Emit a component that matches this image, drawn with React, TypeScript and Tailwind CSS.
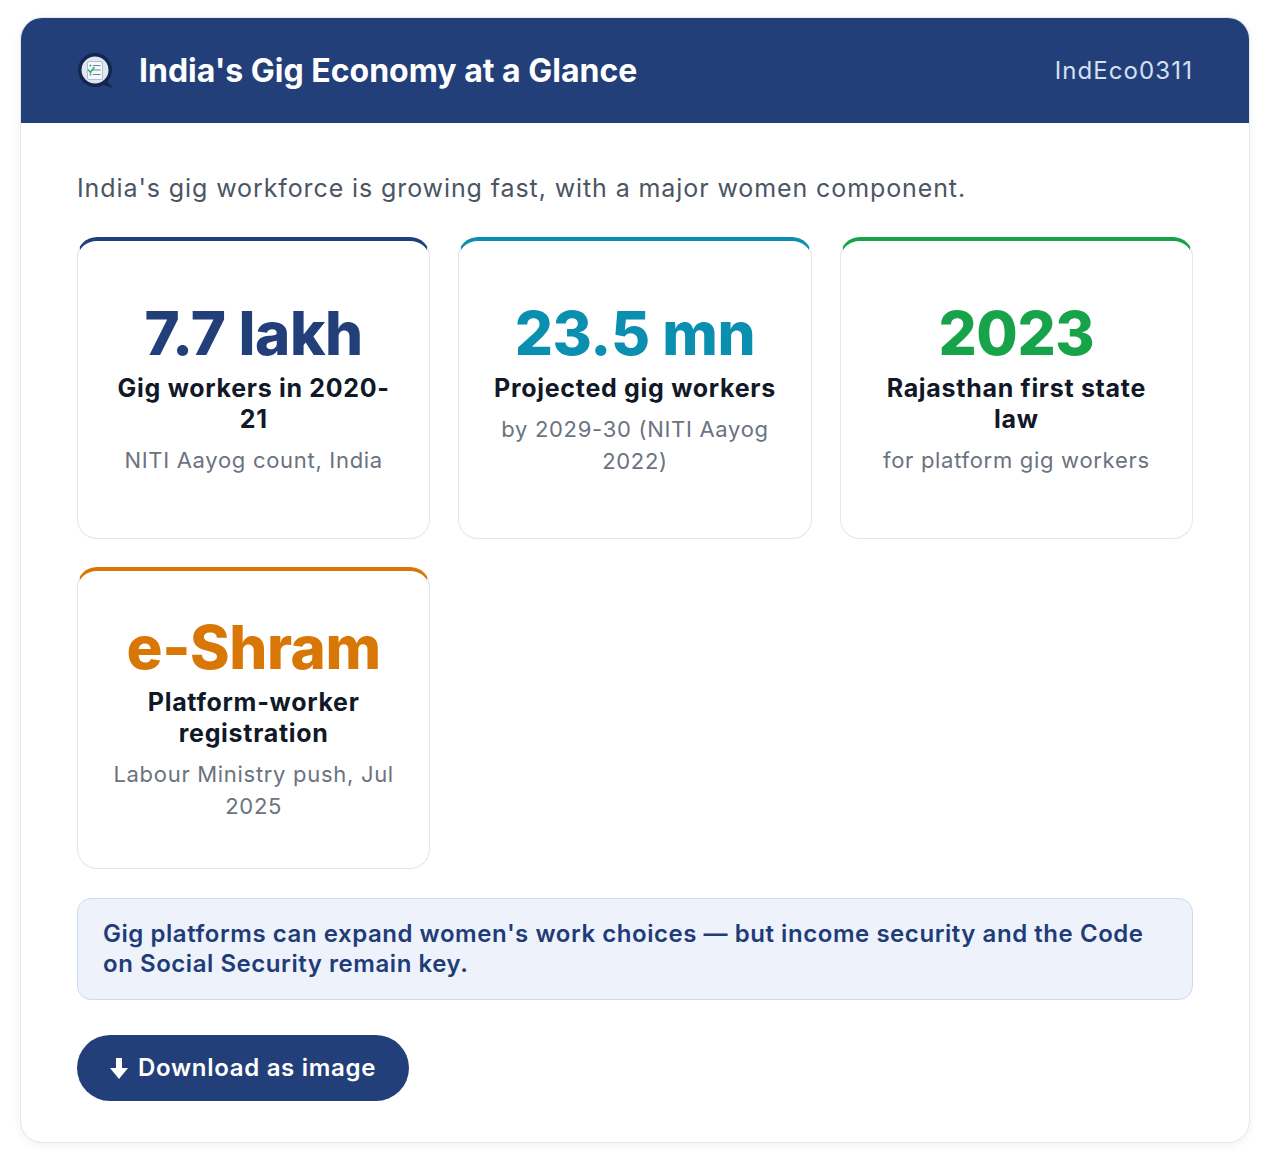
import React from 'react';

type Stat = {
  value: string;
  label: string;
  source: string;
  valueClass: string;
  borderClass: string;
};

const stats: Stat[] = [
  {
    value: '7.7 lakh',
    label: 'Gig workers in 2020-21',
    source: 'NITI Aayog count, India',
    valueClass: 'text-[#233f7a]',
    borderClass: 'border-t-[#233f7a]',
  },
  {
    value: '23.5 mn',
    label: 'Projected gig workers',
    source: 'by 2029-30 (NITI Aayog 2022)',
    valueClass: 'text-[#0b8fb0]',
    borderClass: 'border-t-[#0b8fb0]',
  },
  {
    value: '2023',
    label: 'Rajasthan first state law',
    source: 'for platform gig workers',
    valueClass: 'text-[#17a34a]',
    borderClass: 'border-t-[#17a34a]',
  },
  {
    value: 'e-Shram',
    label: 'Platform-worker registration',
    source: 'Labour Ministry push, Jul 2025',
    valueClass: 'text-[#d97706]',
    borderClass: 'border-t-[#d97706]',
  },
];

function Logo() {
  return (
    <svg width="38" height="38" viewBox="0 0 38 38" className="shrink-0">
      <path d="M29 28 L36 36 L26 33 Z" fill="#14264f" />
      <circle cx="18" cy="18" r="17" fill="#14264f" />
      <circle cx="18" cy="18" r="13.5" fill="#dfe8f1" />
      <rect x="10.5" y="9.5" width="15" height="18" rx="1.5" fill="#f5f8fb" stroke="#9fb2c8" strokeWidth="0.8" />
      <circle cx="13.5" cy="13.5" r="1" fill="#6c84a3" />
      <line x1="16" y1="13.5" x2="23.5" y2="13.5" stroke="#6c84a3" strokeWidth="1.2" />
      <line x1="16" y1="18" x2="23.5" y2="18" stroke="#6c84a3" strokeWidth="1.2" />
      <line x1="16" y1="22.5" x2="23.5" y2="22.5" stroke="#6c84a3" strokeWidth="1.2" />
      <path d="M11.5 18 L13.5 20.5 L17 15.5" stroke="#2fb36a" strokeWidth="1.6" fill="none" strokeLinecap="round" />
      <circle cx="13.5" cy="22.5" r="1" fill="#6c84a3" />
    </svg>
  );
}

function StatCard({ stat }: { stat: Stat }) {
  return (
    <div
      className={`flex min-h-[302px] flex-col items-center justify-center rounded-[20px] border border-[#e3e6eb] border-t-4 bg-white px-[30px] text-center ${stat.borderClass}`}
    >
      <div className={`text-[60px] font-extrabold leading-none tracking-[-0.4px] ${stat.valueClass}`}>{stat.value}</div>
      <div className="mt-[10px] text-[25px] font-bold leading-[31px] tracking-[0.7px] text-[#111827]">{stat.label}</div>
      <div className="mt-[9px] text-[22px] leading-[32px] tracking-[0.7px] text-[#6b7280]">{stat.source}</div>
    </div>
  );
}

export default function App() {
  return (
    <div className="min-h-[1168px] bg-white px-[20px] pt-[17px] pb-[25px]" style={{ fontFamily: 'Inter, "Noto Sans", sans-serif' }}>
      <div className="overflow-hidden rounded-[22px] border border-[#e5e7eb] bg-white shadow-[0_2px_10px_rgba(0,0,0,0.06)]">
        <header className="flex h-[105px] items-center bg-[#233f7a] px-[56px]">
          <div className="flex items-center gap-[24px]">
            <Logo />
            <h1 className="text-[32px] font-bold tracking-[0px] text-white">India's Gig Economy at a Glance</h1>
          </div>
          <span className="ml-auto text-[24px] tracking-[1.1px] text-[#d6e0f0]">IndEco0311</span>
        </header>

        <div className="px-[56px] pt-[47px] pb-[41px]">
          <p className="mb-[31px] text-[25px] leading-[36px] tracking-[0.9px] text-[#4b5563]">
            India's gig workforce is growing fast, with a major women component.
          </p>

          <div className="grid grid-cols-3 gap-[28px]">
            {stats.map((s) => (
              <StatCard key={s.value} stat={s} />
            ))}
          </div>

          <div className="mt-[29px] rounded-[14px] border border-[#cfdaee] bg-[#eef2fb] px-[25px] py-[20px] text-[24px] font-semibold leading-[30px] tracking-[0.55px] text-[#1f3c78]">
            Gig platforms can expand women's work choices — but income security and the Code on Social Security remain key.
          </div>

          <button className="mt-[35px] flex h-[66px] items-center gap-[10px] rounded-full bg-[#233f7a] px-[33px] text-[24px] font-semibold tracking-[0.7px] text-white">
            <svg width="18" height="21" viewBox="0 0 18 21">
              <rect x="6" y="0" width="6" height="11" fill="white" />
              <path d="M0 10 H18 L9 21 Z" fill="white" />
            </svg>
            Download as image
          </button>
        </div>
      </div>
    </div>
  );
}
